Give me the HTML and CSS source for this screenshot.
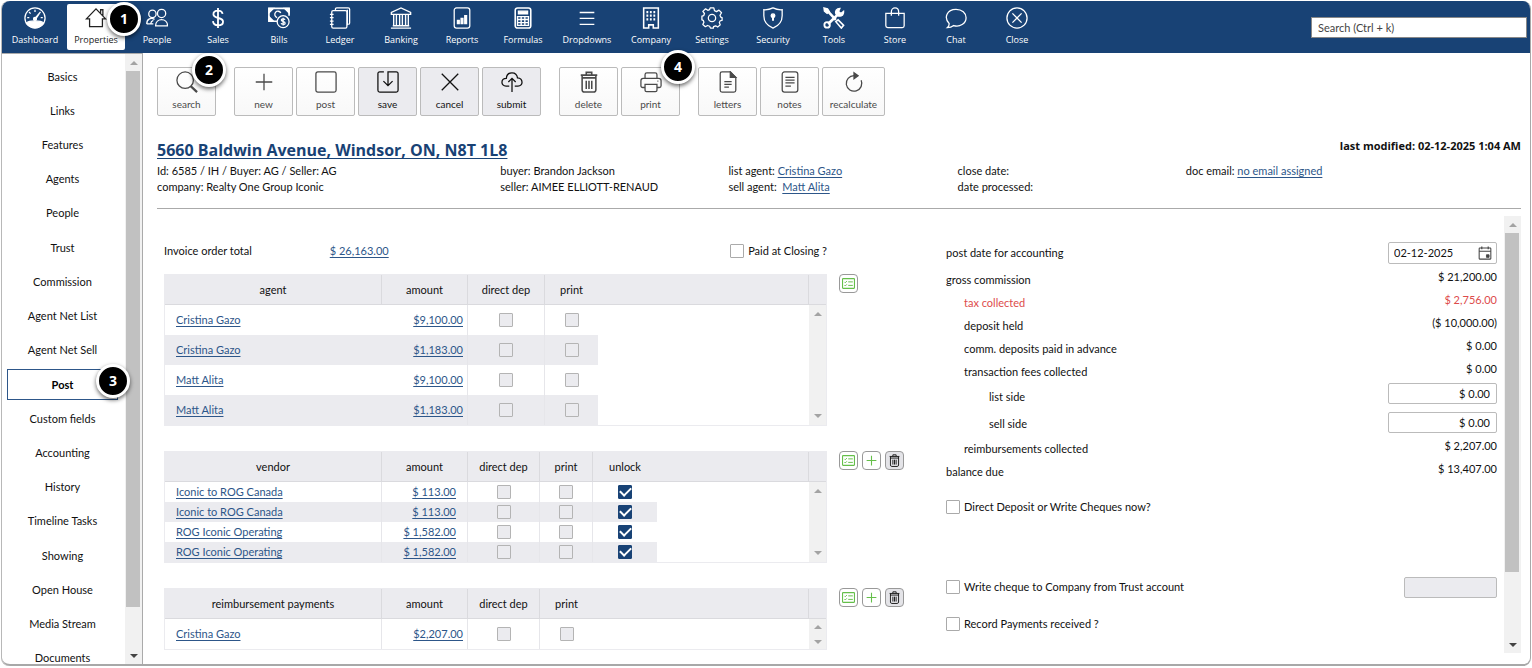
FILE: index.html
```html
<!DOCTYPE html>
<html lang="en">
<head>
  <meta charset="UTF-8">
  <meta name="viewport" content="width=device-width, initial-scale=1.0">
  <title>Properties - Post</title>
  <link rel="stylesheet" href="styles.css">
</head>
<body>

  <!-- icon sprite -->
  <svg class="sprite" aria-hidden="true">
    <symbol id="i-dashboard" viewBox="0 0 24 24">
      <circle cx="12" cy="12" r="11"/>
      <path d="M2.500 17.500C6 14.500 18 14.500 21.500 17.500C18 24 6 24 2.500 17.500z" fill="currentColor"/>
      <path d="M12 3v2.500M5.500 5.500l1.700 1.700M3.500 11.500h2.300M20.500 11.500h-2.300M18 5.500L11 13.500M12.500 13.500L16.500 7.500"/>
      <circle cx="12" cy="13" r="1.600" fill="currentColor"/>
    </symbol>
    <symbol id="i-home" viewBox="0 0 24 24">
      <path d="M1.500 13L12 2l10.500 11h-3.500v8.500H5V13zM17 7V3h2.500v6.500"/>
    </symbol>
    <symbol id="i-people" viewBox="0 0 24 24">
      <circle cx="7" cy="7.500" r="4"/><circle cx="17" cy="7" r="4.500"/>
      <path d="M10.500 20.500c0-9 13-9 13 0zM.8 18.500c0-6 5-7 8.500-5M.8 18.500H8M5 18.500c.3-2 1.500-3.500 3-4"/>
    </symbol>
    <symbol id="i-dollar" viewBox="0 0 24 24">
      <path d="M17 7.500C16.500 5 14.500 4 12 4C9 4 7 5.500 7 8c0 5.500 10.500 2.500 10.500 8c0 2.500-2.200 4-5.500 4c-3 0-5.200-1.500-5.500-4.500M12 1v22" stroke-width="2"/>
    </symbol>
    <symbol id="i-bills" viewBox="0 0 24 24">
      <path d="M10 15.500H1V1.500h22v8" stroke-width="1.800"/>
      <path d="M1 1.500h5L1 6.500zM23 1.500h-5l5 5zM1 15.500v-5l5 5z" fill="currentColor"/>
      <path d="M14 6.500a3.500 3.500 0 1 0-4 5"/>
      <circle cx="16.500" cy="16" r="6.500"/>
      <path d="M18.500 14c-.5-1.500-4-1.500-4 .3c0 2.200 4.200 1.200 4.200 3.300c0 1.800-4 1.800-4.400 0M16.500 11.800v8.400"/>
    </symbol>
    <symbol id="i-ledger" viewBox="0 0 24 24">
      <path d="M7 4V2.500C7 1.500 7.500 1 8.500 1H21c1 0 1.500.5 1.500 1.500v15c0 1-.5 1.500-1.500 1.500"/>
      <path d="M4.500 4H18c1 0 1.500.5 1.500 1.500v16c0 1-.5 1.500-1.500 1.500H4.500C3.500 23 3 22.500 3 21.500v-16C3 4.500 3.500 4 4.500 4zM1 8h4M1 11.700h4M1 15.400h4M1 19h4M20 3v17"/>
    </symbol>
    <symbol id="i-bank" viewBox="0 0 24 24">
      <path d="M1.500 8V6L12 1l10.500 5v2zM3 20.500h18M1 23h22M4 8.500v11.500M7 8.500v11.500M10.500 8.500v11.500M13.500 8.500v11.500M17 8.500v11.500M20 8.500v11.500" stroke-width="1.500"/>
    </symbol>
    <symbol id="i-reports" viewBox="0 0 24 24">
      <rect x="3.500" y="1" width="17" height="22" rx="2.500"/>
      <path d="M7 18v-3.500h2V18zM11 18v-5.500h2V18zM15 18V9.500h2V18z" fill="currentColor"/>
    </symbol>
    <symbol id="i-calc" viewBox="0 0 24 24">
      <rect x="3.500" y="1" width="17" height="22" rx="2.500" stroke-width="1.700"/>
      <path d="M7 4.500h10v3H7z" fill="currentColor"/>
      <path d="M6 10.500h12v9.500H6zM10 10.500v9.500M14 10.500v9.500M6 13.700h12M6 17h12" stroke-width="1.500"/>
    </symbol>
    <symbol id="i-lines" viewBox="0 0 24 24"><path d="M4 6h16M4 12.500h16M4 19h16"/></symbol>
    <symbol id="i-company" viewBox="0 0 24 24">
      <path d="M4 1h16v22h-5.500v-3.500h-5V23H4z" stroke-width="1.700"/>
      <path d="M7 5.500h10M7 9.500h10M7 13.500h10" stroke-width="2.500" stroke-dasharray="2 1.800"/>
    </symbol>
    <symbol id="i-gear" viewBox="0 0 24 24">
      <path d="M10 1h4l.7 3 2.200 1 2.700-1.600 2.800 2.900L20.700 9l.8 2 1.500.5v3l-2 .5-1 2 1 2.500-2.800 2.300-2.200-1.300-2.300 1L13.500 23h-3.200l-.9-2-2.300-.8-2.300 1.300L2 19l1.200-2.500-.8-2L1 14v-4l2-.7.800-2.200L2 4.800 5 2l2.400 1.600 2-.8z" stroke-linejoin="round"/>
      <circle cx="12" cy="12" r="4"/>
    </symbol>
    <symbol id="i-shield" viewBox="0 0 24 24">
      <path d="M12 1c3 1.500 6.500 2.200 10 2v6.500c0 6.500-4 11-10 13.500C6 20.500 2 16 2 9.500V3c3.500.2 7-.5 10-2z"/>
      <circle cx="12" cy="9.500" r="2" fill="currentColor"/><path d="M12 10v5" stroke-width="2.200"/>
    </symbol>
    <symbol id="i-tools" viewBox="0 0 24 24">
      <path d="M5.500 18.500L18.500 6M2 2l5.500 5L14 14" stroke-width="2.800"/>
      <path d="M22.500 4.500l-3 2.500-2.500-2 1.500-3.500c-4 0-5.500 3-4.500 6l3 2.500c4 .5 6-2 5.500-5.500z" fill="currentColor"/>
      <circle cx="4.500" cy="19.500" r="3" stroke-width="2"/>
      <path d="M14 16l2.500-2 6 6-2.500 3z" stroke-width="1.700"/>
      <path d="M1 1l4 1 2 3-2.500 2-3-2.500z" fill="currentColor"/>
    </symbol>
    <symbol id="i-bag" viewBox="0 0 24 24">
      <path d="M2 7h20v13.500c0 1-1 2-2 2H4c-1 0-2-1-2-2zM8 9.500V5.500c0-6 8-6 8 0v4"/>
    </symbol>
    <symbol id="i-chat" viewBox="0 0 24 24">
      <path d="M4.500 18C-1.500 12 2 2.500 12 2.500c6.500 0 11 4 11 9.200c0 6.500-7 10.500-13.500 8.500c-2 1.600-4.500 2.300-7 2.300c1.500-1.300 2.200-2.800 2-4.500z"/>
    </symbol>
    <symbol id="i-close" viewBox="0 0 24 24"><circle cx="12" cy="12" r="11"/><path d="M7 7l10 10M17 7L7 17"/></symbol>
    <symbol id="i-search" viewBox="0 0 24 24">
      <circle cx="10" cy="10" r="9"/><path d="M16 16.500l7 6.500" stroke-width="2.400"/>
    </symbol>
    <symbol id="i-plus" viewBox="0 0 24 24"><path d="M12 3v18M3 12h18"/></symbol>
    <symbol id="i-square" viewBox="0 0 24 24"><rect x="1" y="1" width="22" height="22" rx="2"/></symbol>
    <symbol id="i-save" viewBox="0 0 24 24">
      <path d="M7.500 1H3C1.700 1 1 1.700 1 3v18c0 1.300.7 2 2 2h18c1.300 0 2-.7 2-2V3c0-1.300-.7-2-2-2h-9v15M7 11l5 5 5-5"/>
    </symbol>
    <symbol id="i-x" viewBox="0 0 24 24"><path d="M3 3l18 18M21 3L3 21"/></symbol>
    <symbol id="i-cloud" viewBox="0 0 24 24">
      <path d="M9 16.500H5.500c-6 0-6-8.500.3-8.500C6.500 0 17 0 18 7.500c6.500.5 6.500 9 .5 9H15M12 23V8.500M8 12l4-4 4 4"/>
    </symbol>
    <symbol id="i-trash" viewBox="0 0 24 24">
      <path d="M3 4.500h18M9 4V1.500h6V4M4.500 5v15.500c0 1.300.9 2.500 2.500 2.500h10c1.600 0 2.500-1.200 2.500-2.500V5M4 7.500h16M9 10.500v9M12 10.500v9M15 10.500v9" stroke-width="1.700"/>
    </symbol>
    <symbol id="i-print" viewBox="0 0 24 24">
      <path d="M5.500 8V4c0-1 .7-2 2-2h9c1.300 0 2 1 2 2v4M5.500 18H3c-1.200 0-2-.7-2-2v-5.500C1 9 1.800 8 3.500 8h17C22.200 8 23 9 23 10.500V16c0 1.300-.8 2-2 2h-2.500M5.500 14.500h13V21c0 1-.7 1.500-1.700 1.500H7.200c-1 0-1.700-.5-1.700-1.500zM19 11h1"/>
    </symbol>
    <symbol id="i-letter" viewBox="0 0 24 24">
      <path d="M14.500 1H5.500C4.200 1 3.500 1.700 3.500 3v18c0 1.300.7 2 2 2h13c1.300 0 2-.7 2-2V7zM8 11.500h8M8 14.500h8M8 17.500h5"/>
      <path d="M14.500 1v6h6z" fill="currentColor"/>
    </symbol>
    <symbol id="i-notes" viewBox="0 0 24 24">
      <rect x="3.500" y="1" width="17" height="22" rx="2.500"/><path d="M7 7h10M7 10h10M7 13h10M7 16.500h6"/>
    </symbol>
    <symbol id="i-recalc" viewBox="0 0 24 24">
      <path d="M12 5a8.500 8.500 0 1 0 7.800 5"/><path d="M12 2l4.500 3.200L12 8.500z" fill="currentColor"/>
    </symbol>
    <symbol id="i-list" viewBox="0 0 24 24">
      <rect x="1" y="3" width="22" height="18" rx="1" stroke-width="2"/>
      <path d="M4.500 9l1.500 1.500L9 7.500M4.500 15l1.500 1.500L9 13.500M11.500 9H20M11.500 15.500H20" stroke-width="1.800"/>
    </symbol>
    <symbol id="i-calendar" viewBox="0 0 24 24">
      <rect x="2" y="3.500" width="20" height="19" rx="1" stroke-width="1.800"/><path d="M2 9h20M6.500 1v4.500M17.500 1v4.500" stroke-width="2"/>
      <path d="M14.500 15h4.500v4.500h-4.500z" fill="currentColor"/>
    </symbol>
  </svg>

  <div class="window">
    <header class="topbar">
      <nav class="menu" aria-label="Main">
        <a href="#"><svg><use href="#i-dashboard"/></svg>Dashboard</a>
        <a href="#" class="active"><svg><use href="#i-home"/></svg>Properties<span class="callout callout-1">1</span></a>
        <a href="#"><svg><use href="#i-people"/></svg>People</a>
        <a href="#"><svg><use href="#i-dollar"/></svg>Sales</a>
        <a href="#"><svg><use href="#i-bills"/></svg>Bills</a>
        <a href="#"><svg><use href="#i-ledger"/></svg>Ledger</a>
        <a href="#"><svg><use href="#i-bank"/></svg>Banking</a>
        <a href="#"><svg><use href="#i-reports"/></svg>Reports</a>
        <a href="#"><svg><use href="#i-calc"/></svg>Formulas</a>
        <a href="#" class="wide"><svg><use href="#i-lines"/></svg>Dropdowns</a>
        <a href="#"><svg><use href="#i-company"/></svg>Company</a>
        <a href="#"><svg><use href="#i-gear"/></svg>Settings</a>
        <a href="#"><svg><use href="#i-shield"/></svg>Security</a>
        <a href="#"><svg><use href="#i-tools"/></svg>Tools</a>
        <a href="#"><svg><use href="#i-bag"/></svg>Store</a>
        <a href="#"><svg><use href="#i-chat"/></svg>Chat</a>
        <a href="#"><svg><use href="#i-close"/></svg>Close</a>
      </nav>
      <input class="quick-search" type="text" placeholder="Search (Ctrl + k)" aria-label="Search">
    </header>

    <div class="body">
      <aside class="sidebar">
        <nav class="side-nav" aria-label="Property">
          <a href="#">Basics</a>
          <a href="#">Links</a>
          <a href="#">Features</a>
          <a href="#">Agents</a>
          <a href="#">People</a>
          <a href="#">Trust</a>
          <a href="#">Commission</a>
          <a href="#">Agent Net List</a>
          <a href="#">Agent Net Sell</a>
          <a href="#" class="current">Post<span class="callout callout-3">3</span></a>
          <a href="#">Custom fields</a>
          <a href="#">Accounting</a>
          <a href="#">History</a>
          <a href="#">Timeline Tasks</a>
          <a href="#">Showing</a>
          <a href="#">Open House</a>
          <a href="#">Media Stream</a>
          <a href="#">Documents</a>
        </nav>
        <div class="scrollbar">
          <i class="up"></i>
          <div class="track"><div class="thumb thumb-side"></div></div>
          <i class="down dark"></i>
        </div>
      </aside>

      <main>
        <div class="toolbar">
          <div class="group">
            <button><svg><use href="#i-search"/></svg>search<span class="callout callout-2">2</span></button>
          </div>
          <div class="group">
            <button><svg><use href="#i-plus"/></svg>new</button>
            <button><svg><use href="#i-square"/></svg>post</button>
            <button class="on"><svg><use href="#i-save"/></svg>save</button>
            <button class="on"><svg><use href="#i-x"/></svg>cancel</button>
            <button class="on"><svg><use href="#i-cloud"/></svg>submit</button>
          </div>
          <div class="group">
            <button><svg><use href="#i-trash"/></svg>delete</button>
            <button><svg><use href="#i-print"/></svg>print<span class="callout callout-4">4</span></button>
          </div>
          <div class="group">
            <button><svg><use href="#i-letter"/></svg>letters</button>
            <button><svg><use href="#i-notes"/></svg>notes</button>
            <button class="wide"><svg><use href="#i-recalc"/></svg>recalculate</button>
          </div>
        </div>

        <div class="title-row">
          <h1><a href="#">5660 Baldwin Avenue, Windsor, ON, N8T 1L8</a></h1>
          <strong>last modified: 02-12-2025 1:04 AM</strong>
        </div>

        <div class="info">
          <div>Id: 6585 / IH / Buyer: AG / Seller: AG<br>company: Realty One Group Iconic</div>
          <div>buyer: Brandon Jackson<br>seller: AIMEE ELLIOTT-RENAUD</div>
          <div>list agent: <a href="#">Cristina Gazo</a><br>sell agent: &nbsp;<a href="#">Matt Alita</a></div>
          <div>close date:<br>date processed:</div>
          <div>doc email: <a href="#">no email assigned</a></div>
        </div>

        <div class="content">
          <div class="payouts">
            <div class="invoice">
              <span class="invoice-label">Invoice order total</span>
              <a href="#">$ 26,163.00</a>
              <label class="check"><input type="checkbox">Paid at Closing ?</label>
            </div>

            <section class="block">
              <table class="agents">
                <colgroup><col class="c-name"><col class="c-amount"><col class="c-dep"><col class="c-print"><col><col class="c-scroll"></colgroup>
                <thead>
                  <tr><th>agent</th><th>amount</th><th>direct dep</th><th class="last">print</th><th class="last"></th><th></th></tr>
                </thead>
                <tbody>
                  <tr>
                    <td><a href="#">Cristina Gazo</a></td><td><a href="#">$9,100.00</a></td>
                    <td><input type="checkbox" disabled aria-label="direct dep"></td><td><input type="checkbox" disabled aria-label="print"></td>
                    <td class="blank"></td>
                    <td class="scroll" rowspan="4"><i class="up"></i><i class="down"></i></td>
                  </tr>
                  <tr>
                    <td><a href="#">Cristina Gazo</a></td><td><a href="#">$1,183.00</a></td>
                    <td><input type="checkbox" disabled aria-label="direct dep"></td><td><input type="checkbox" disabled aria-label="print"></td>
                    <td class="blank"></td>
                  </tr>
                  <tr>
                    <td><a href="#">Matt Alita</a></td><td><a href="#">$9,100.00</a></td>
                    <td><input type="checkbox" disabled aria-label="direct dep"></td><td><input type="checkbox" disabled aria-label="print"></td>
                    <td class="blank"></td>
                  </tr>
                  <tr>
                    <td><a href="#">Matt Alita</a></td><td><a href="#">$1,183.00</a></td>
                    <td><input type="checkbox" disabled aria-label="direct dep"></td><td><input type="checkbox" disabled aria-label="print"></td>
                    <td class="blank"></td>
                  </tr>
                </tbody>
              </table>
              <div class="actions">
                <button aria-label="Select"><svg><use href="#i-list"/></svg></button>
              </div>
            </section>

            <section class="block">
              <table class="vendors">
                <colgroup><col class="c-name"><col class="c-amount"><col class="c-dep-sm"><col class="c-print"><col class="c-unlock"><col><col class="c-scroll"></colgroup>
                <thead>
                  <tr><th>vendor</th><th>amount</th><th>direct dep</th><th>print</th><th class="last">unlock</th><th class="last"></th><th></th></tr>
                </thead>
                <tbody>
                  <tr>
                    <td><a href="#">Iconic to ROG Canada</a></td><td><a href="#">$ 113.00</a></td>
                    <td><input type="checkbox" disabled aria-label="direct dep"></td><td><input type="checkbox" disabled aria-label="print"></td>
                    <td><input type="checkbox" checked aria-label="unlock"></td>
                    <td class="blank"></td>
                    <td class="scroll" rowspan="4"><i class="up"></i><i class="down"></i></td>
                  </tr>
                  <tr>
                    <td><a href="#">Iconic to ROG Canada</a></td><td><a href="#">$ 113.00</a></td>
                    <td><input type="checkbox" disabled aria-label="direct dep"></td><td><input type="checkbox" disabled aria-label="print"></td>
                    <td><input type="checkbox" checked aria-label="unlock"></td>
                    <td class="blank"></td>
                  </tr>
                  <tr>
                    <td><a href="#">ROG Iconic Operating</a></td><td><a href="#">$ 1,582.00</a></td>
                    <td><input type="checkbox" disabled aria-label="direct dep"></td><td><input type="checkbox" disabled aria-label="print"></td>
                    <td><input type="checkbox" checked aria-label="unlock"></td>
                    <td class="blank"></td>
                  </tr>
                  <tr>
                    <td><a href="#">ROG Iconic Operating</a></td><td><a href="#">$ 1,582.00</a></td>
                    <td><input type="checkbox" disabled aria-label="direct dep"></td><td><input type="checkbox" disabled aria-label="print"></td>
                    <td><input type="checkbox" checked aria-label="unlock"></td>
                    <td class="blank"></td>
                  </tr>
                </tbody>
              </table>
              <div class="actions">
                <button aria-label="Select"><svg><use href="#i-list"/></svg></button>
                <button aria-label="Add"><svg><use href="#i-plus"/></svg></button>
                <button class="remove" aria-label="Delete"><svg><use href="#i-trash"/></svg></button>
              </div>
            </section>

            <section class="block">
              <table class="reimbursements">
                <colgroup><col class="c-name"><col class="c-amount"><col class="c-dep-sm"><col class="c-print"><col><col class="c-scroll"></colgroup>
                <thead>
                  <tr><th>reimbursement payments</th><th>amount</th><th>direct dep</th><th class="last">print</th><th class="last"></th><th></th></tr>
                </thead>
                <tbody>
                  <tr>
                    <td><a href="#">Cristina Gazo</a></td><td><a href="#">$2,207.00</a></td>
                    <td><input type="checkbox" disabled aria-label="direct dep"></td><td><input type="checkbox" disabled aria-label="print"></td>
                    <td class="blank"></td>
                    <td class="scroll"><i class="up"></i><i class="down"></i></td>
                  </tr>
                </tbody>
              </table>
              <div class="actions">
                <button aria-label="Select"><svg><use href="#i-list"/></svg></button>
                <button aria-label="Add"><svg><use href="#i-plus"/></svg></button>
                <button class="remove" aria-label="Delete"><svg><use href="#i-trash"/></svg></button>
              </div>
            </section>
          </div>

          <div class="summary">
            <div class="date-row">
              <label for="post-date">post date for accounting</label>
              <div class="date-field">
                <input type="text" id="post-date" value="02-12-2025">
                <button aria-label="Pick a date"><svg><use href="#i-calendar"/></svg></button>
              </div>
            </div>
            <div class="row"><span>gross commission</span><output>$ 21,200.00</output></div>
            <div class="row sub tax"><span>tax collected</span><output>$ 2,756.00</output></div>
            <div class="row sub"><span>deposit held</span><output>($ 10,000.00)</output></div>
            <div class="row sub"><span>comm. deposits paid in advance</span><output>$ 0.00</output></div>
            <div class="row sub"><span>transaction fees collected</span><output>$ 0.00</output></div>
            <div class="row side"><label for="list-side">list side</label><input type="text" id="list-side" value="$ 0.00"></div>
            <div class="row side sell"><label for="sell-side">sell side</label><input type="text" id="sell-side" value="$ 0.00"></div>
            <div class="row sub"><span>reimbursements collected</span><output>$ 2,207.00</output></div>
            <div class="row"><span>balance due</span><output>$ 13,407.00</output></div>

            <div class="option option-deposit"><label class="check"><input type="checkbox">Direct Deposit or Write Cheques now?</label></div>
            <div class="option option-cheque">
              <label class="check"><input type="checkbox">Write cheque to Company from Trust account</label>
              <input class="amount" type="text" disabled aria-label="Cheque amount">
            </div>
            <div class="option option-record"><label class="check"><input type="checkbox">Record Payments received ?</label></div>
          </div>

          <div class="scrollbar">
            <i class="up"></i>
            <div class="track"><div class="thumb thumb-main"></div></div>
            <i class="down dark"></i>
          </div>
        </div>
      </main>
    </div>
  </div>

</body>
</html>
```

FILE: styles.css
```css
* {
  box-sizing: border-box;
}

body {
  height: 100vh;
  margin: 0;
  padding: 1px 1px 2px 2px;
  overflow: hidden;
  background: #fff;
  color: #111;
  font: 11px/16px Lato, "Open Sans", sans-serif;
}

a {
  color: #2d5689;
  text-underline-offset: 2px;
}

button, input {
  font: inherit;
  color: inherit;
}

svg {
  display: block;
  fill: none;
  stroke: currentColor;
  stroke-width: 1.4;
}

.sprite {
  position: absolute;
  width: 0;
  height: 0;
}

.window {
  display: flex;
  flex-direction: column;
  height: 100%;
  overflow: hidden;
  border: solid #a8a8a8;
  border-width: 0 1px 2px 0;
  border-radius: 8px;
  box-shadow: -1px 0 0 #b8b8b8;
}

/* top bar */
.topbar {
  display: flex;
  flex: none;
  justify-content: space-between;
  align-items: center;
  height: 52px;
  padding: 0 3px 0 4px;
  background: #184275;
}

.menu {
  display: flex;
  gap: 3px;
}

.menu a {
  position: relative;
  display: flex;
  flex-direction: column;
  align-items: center;
  width: 58px;
  height: 46px;
  padding-top: 3px;
  border-radius: 2px;
  color: #fff;
  font-family: "Open Sans", "Noto Sans", sans-serif;
  font-size: 9px;
  line-height: 14px;
  text-decoration: none;
}

.menu a.wide {
  width: 64px;
}

.menu svg {
  width: 22px;
  height: 22px;
  margin-bottom: 4px;
}

.menu a.active {
  background: #fff;
  color: #222;
}

.quick-search {
  width: 216px;
  height: 21px;
  padding: 0 6px;
  border: 1px solid #888;
  border-radius: 0;
}

.quick-search::placeholder {
  color: #444;
  opacity: 1;
}

/* numbered markers */
.callout {
  position: absolute;
  z-index: 2;
  width: 34px;
  height: 34px;
  border: 3px solid #fff;
  border-radius: 50%;
  background: #000;
  box-shadow: 0 2px 4px rgba(0, 0, 0, 0.6);
  color: #fff;
  font-family: "Open Sans", "Noto Sans", sans-serif;
  font-size: 14px;
  font-weight: 700;
  line-height: 28px;
  text-align: center;
}

.callout-1 {
  top: -2px;
  right: -16px;
}

.callout-2 {
  top: -15px;
  right: -11px;
}

.callout-3 {
  top: -5px;
  right: -12px;
}

.callout-4 {
  top: -18px;
  right: -16px;
}

/* sidebar */
.body {
  display: flex;
  flex: 1;
  min-height: 0;
}

.sidebar {
  display: flex;
  flex: none;
  width: 141px;
  border: 1px solid #aaa;
  border-width: 1px 1px 0 0;
}

/* the list runs on below the visible area */
.side-nav {
  display: flex;
  flex: 1;
  flex-direction: column;
  gap: 3px;
  margin-bottom: -10px;
  padding: 7px 7px 0 5px;
}

.side-nav a {
  position: relative;
  display: flex;
  flex: 1;
  justify-content: center;
  align-items: center;
  color: #111;
  text-decoration: none;
}

.side-nav a.current {
  box-shadow: inset 0 0 0 1px #2d5689;
  color: #000;
  font-weight: 700;
}

.scrollbar {
  display: flex;
  flex: none;
  flex-direction: column;
  width: 17px;
  background: #f1f1f1;
}

.track {
  flex: 1;
  padding: 0 2px 0 1px;
}

.thumb {
  background: #c1c1c1;
}

.thumb-side {
  height: 93%;
}

.thumb-main {
  height: 84%;
}

/* scroll arrows */
.up, .down {
  display: flex;
  flex: none;
  justify-content: center;
  align-items: center;
  height: 17px;
}

.up::before, .down::before {
  content: "";
  border: 4px solid transparent;
}

.up::before {
  border-top-width: 0;
  border-bottom-color: #a3a3a3;
}

.down::before {
  border-bottom-width: 0;
  border-top-color: #a3a3a3;
}

.down.dark::before {
  border-top-color: #444;
}

/* main area */
main {
  display: flex;
  flex: 1;
  flex-direction: column;
  min-width: 0;
  padding: 14px 9px 11px 14px;
}

.toolbar {
  display: flex;
  gap: 18px;
}

.group {
  display: flex;
  gap: 3px;
}

.toolbar button {
  position: relative;
  display: flex;
  flex-direction: column;
  align-items: center;
  width: 59px;
  height: 49px;
  padding: 3px 0 0;
  border: 1px solid #bbb;
  border-radius: 2px;
  background: linear-gradient(#fff, #f8f8f8);
  color: #4a4a4a;
  font-size: 10px;
  line-height: 16px;
}

.toolbar button.wide {
  width: 63px;
}

.toolbar button.on {
  background: #ebebef;
  color: #111;
}

.toolbar svg {
  width: 22px;
  height: 22px;
  margin-bottom: 3px;
}

.title-row {
  display: flex;
  justify-content: space-between;
  margin-top: 22px;
}

.title-row strong {
  font-family: "Open Sans", "Noto Sans", sans-serif;
  line-height: 16px;
}

h1 {
  margin: 0;
  font-family: "Open Sans", "Noto Sans", sans-serif;
  font-size: 16px;
  line-height: 25px;
}

h1 a {
  color: #184275;
}

.info {
  display: grid;
  grid-template-columns: 343fr 228fr 229fr 228fr 335fr;
  padding-bottom: 13px;
  border-bottom: 1px solid #aaa;
}

.content {
  display: flex;
  flex: 1;
  min-height: 0;
  margin-top: 7px;
  padding-left: 7px;
}

.payouts {
  flex: 782;
  padding-top: 25px;
}

.invoice {
  display: flex;
  align-items: center;
  height: 20px;
  margin: 0 119px 13px 0;
}

.invoice-label {
  width: 25%;
}

.invoice .check {
  margin-left: auto;
}

/* check boxes */
.check {
  display: flex;
  align-items: center;
  gap: 4px;
}

input[type="checkbox"] {
  display: block;
  flex: none;
  width: 14px;
  height: 14px;
  margin: 0;
  appearance: none;
  border: 1px solid #aaa;
  border-radius: 1px;
  background: #fff;
}

input[type="checkbox"]:disabled {
  border-color: #b4b4b4;
  background: #ebebef;
}

input[type="checkbox"]:checked {
  display: grid;
  place-items: center;
  border-color: #184275;
  background: #184275;
}

input[type="checkbox"]:checked::before {
  content: "";
  width: 9px;
  height: 5px;
  margin-bottom: 3px;
  border: solid #fff;
  border-width: 0 0 2px 2px;
  transform: rotate(-45deg);
}

/* payout tables */
.block {
  display: flex;
  align-items: flex-start;
  margin-bottom: 25px;
}

table {
  flex: 1;
  width: 100%;
  table-layout: fixed;
  border-collapse: separate;
  border-spacing: 0;
  border: 1px solid #ebebef;
}

.c-name {
  width: 217px;
}

.c-amount {
  width: 86px;
}

.c-dep {
  width: 77px;
}

.c-dep-sm {
  width: 72px;
}

.c-print {
  width: 53px;
}

.c-unlock {
  width: 64px;
}

.c-scroll {
  width: 17px;
}

th {
  height: 30px;
  padding: 0;
  border-right: 1px solid #dadade;
  border-bottom: 1px solid #dadade;
  background: #ebebef;
  font-weight: 400;
}

th.last:not(:empty), th:last-child {
  border-right: 0;
}

td {
  height: 30px;
  padding: 0;
}

.vendors td {
  height: 20px;
}

td:first-child {
  padding-left: 11px;
}

td:nth-child(2) {
  padding-right: 4px;
  border-right: 1px solid #e6e6ea;
  text-align: right;
}

.vendors td:nth-child(2) {
  padding-right: 11px;
}

td:nth-child(3) {
  border-right: 1px solid #e6e6ea;
}

.vendors td:first-child, .vendors td:nth-child(4), .reimbursements td:first-child {
  border-right: 1px solid #e6e6ea;
}

tbody tr:nth-child(even) td:not(.blank) {
  background: #ebebef;
}

td input[type="checkbox"] {
  margin: 0 auto;
}

td.scroll {
  height: 1px;
  background: #f1f1f1;
  vertical-align: top;
}

td.scroll .down {
  margin-top: calc(100% + 68px);
}

.vendors td.scroll .down {
  margin-top: calc(100% + 28px);
}

.reimbursements td.scroll .down {
  margin-top: 0;
}

.reimbursements .up, .reimbursements .down {
  height: 15px;
}

.actions {
  display: flex;
  flex: none;
  gap: 4px;
  width: 119px;
  padding-left: 12px;
}

.actions button {
  width: 19px;
  height: 19px;
  padding: 2px;
  border: 1px solid #999;
  border-radius: 4px;
  background: #fff;
  color: #65bf4a;
}

.actions button.remove {
  background: #e4e4e8;
  color: #111;
}

.actions svg {
  width: 13px;
  height: 13px;
  stroke-width: 2;
}

/* commission summary */
.summary {
  flex: 551;
  padding-top: 26px;
}

.date-row {
  display: flex;
  justify-content: space-between;
  align-items: center;
  height: 22px;
  margin-bottom: 1px;
}

.date-field {
  display: flex;
  align-items: center;
  width: 109px;
  height: 22px;
  border: 1px solid #bbb;
  border-radius: 2px;
}

.date-field input {
  flex: 1;
  min-width: 0;
  padding: 0 0 0 5px;
  border: 0;
  background: none;
}

.date-field button {
  padding: 0 4px;
  border: 0;
  background: none;
  color: #444;
}

.date-field svg {
  width: 14px;
  height: 14px;
}

.row {
  display: flex;
  justify-content: space-between;
  align-items: center;
  height: 23px;
}

.row span, .row label {
  padding-top: 7px;
}

.sub span {
  padding-left: 18px;
}

.side {
  margin-top: 2px;
}

.side label {
  padding-left: 43px;
}

.tax {
  color: #dd4b4b;
}

.row input, .amount {
  width: 109px;
  height: 21px;
  padding: 0 6px;
  border: 1px solid #bbb;
  border-radius: 2px;
  background: #fff;
  text-align: right;
}

.sell {
  margin-top: 6px;
}

.sell label {
  padding-top: 2px;
}

.option {
  display: flex;
  justify-content: space-between;
  align-items: center;
  height: 22px;
}

.option-deposit {
  margin-top: 16px;
}

.option-cheque {
  margin-top: 58px;
}

.option-record {
  margin-top: 15px;
}

.amount {
  width: 93px;
}

.amount:disabled {
  background: #ebebef;
}

.summary + .scrollbar {
  margin-left: 7px;
}
```
